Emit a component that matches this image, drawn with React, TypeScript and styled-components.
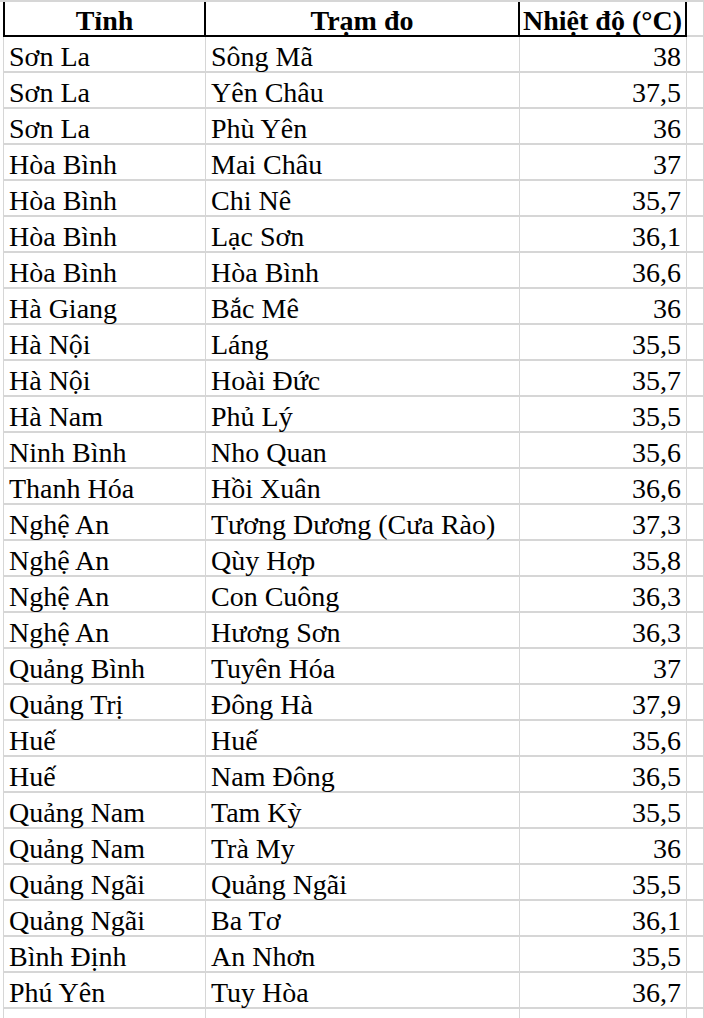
import React from "react";
import styled, { createGlobalStyle } from "styled-components";

const GlobalStyle = createGlobalStyle`
  html, body {
    margin: 0;
    padding: 0;
    background: #ffffff;
  }
  body {
    font-family: "Liberation Serif", "Times New Roman", serif;
    color: #000000;
    overflow: hidden;
  }
`;

const GRID = "#d6d6d6";
const INK = "#000000";

const Sheet = styled.div`
  padding-left: 3px;
  border-top: 2px solid ${GRID};
  width: 100%;
  box-sizing: border-box;
`;

const Row = styled.div<{ $header?: boolean }>`
  display: grid;
  grid-template-columns: 203px 314px 167px 1fr;
  height: ${(p) => (p.$header ? 35 : 36)}px;
`;

type Align = "left" | "center" | "right";

const Cell = styled.div<{
  $align?: Align;
  $header?: boolean;
  $first?: boolean;
  $outside?: boolean;
}>`
  box-sizing: border-box;
  display: flex;
  align-items: flex-end;
  justify-content: ${(p) =>
    p.$align === "right" ? "flex-end" : p.$align === "center" ? "center" : "flex-start"};
  padding: 0 ${(p) => (p.$align === "right" ? "5px" : "0")} 0
    ${(p) => (p.$align === "left" ? "5px" : "0")};
  font-family: "Liberation Serif", "Times New Roman", serif;
  font-size: 28px;
  line-height: 29px;
  font-weight: ${(p) => (p.$header ? 700 : 400)};
  white-space: nowrap;
  overflow: visible;
  border-bottom: 2px solid ${(p) => (p.$header && !p.$outside ? INK : GRID)};
  border-right: ${(p) =>
    p.$header && !p.$outside ? `2px solid ${INK}` : `1px solid ${GRID}`};
  border-left: ${(p) =>
    p.$first ? (p.$header ? `2px solid ${INK}` : `1px solid ${GRID}`) : "none"};
`;

type Entry = [string, string, string];

const data: Entry[] = [
  ["Sơn La", "Sông Mã", "38"],
  ["Sơn La", "Yên Châu", "37,5"],
  ["Sơn La", "Phù Yên", "36"],
  ["Hòa Bình", "Mai Châu", "37"],
  ["Hòa Bình", "Chi Nê", "35,7"],
  ["Hòa Bình", "Lạc Sơn", "36,1"],
  ["Hòa Bình", "Hòa Bình", "36,6"],
  ["Hà Giang", "Bắc Mê", "36"],
  ["Hà Nội", "Láng", "35,5"],
  ["Hà Nội", "Hoài Đức", "35,7"],
  ["Hà Nam", "Phủ Lý", "35,5"],
  ["Ninh Bình", "Nho Quan", "35,6"],
  ["Thanh Hóa", "Hồi Xuân", "36,6"],
  ["Nghệ An", "Tương Dương (Cưa Rào)", "37,3"],
  ["Nghệ An", "Qùy Hợp", "35,8"],
  ["Nghệ An", "Con Cuông", "36,3"],
  ["Nghệ An", "Hương Sơn", "36,3"],
  ["Quảng Bình", "Tuyên Hóa", "37"],
  ["Quảng Trị", "Đông Hà", "37,9"],
  ["Huế", "Huế", "35,6"],
  ["Huế", "Nam Đông", "36,5"],
  ["Quảng Nam", "Tam Kỳ", "35,5"],
  ["Quảng Nam", "Trà My", "36"],
  ["Quảng Ngãi", "Quảng Ngãi", "35,5"],
  ["Quảng Ngãi", "Ba Tơ", "36,1"],
  ["Bình Định", "An Nhơn", "35,5"],
  ["Phú Yên", "Tuy Hòa", "36,7"],
];

export default function App() {
  return (
    <>
      <GlobalStyle />
      <Sheet>
        <Row $header>
          <Cell $header $first $align="center">Tỉnh</Cell>
          <Cell $header $align="center">Trạm đo</Cell>
          <Cell $header $align="center">Nhiệt độ (°C)</Cell>
          <Cell $header $outside />
        </Row>
        {data.map(([province, station, temp], i) => (
          <Row key={i}>
            <Cell $first $align="left">{province}</Cell>
            <Cell $align="left">{station}</Cell>
            <Cell $align="right">{temp}</Cell>
            <Cell $outside />
          </Row>
        ))}
        <Row>
          <Cell $first />
          <Cell />
          <Cell />
          <Cell $outside />
        </Row>
      </Sheet>
    </>
  );
}
